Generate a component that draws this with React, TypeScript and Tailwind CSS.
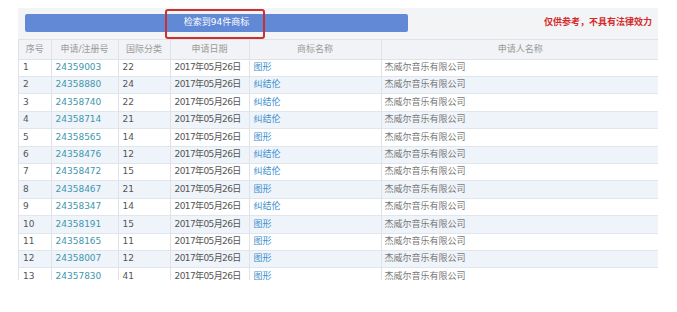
import React from 'react';

const rows = [
  ['1', '24359003', '22', '图形'],
  ['2', '24358880', '24', '纠结伦'],
  ['3', '24358740', '22', '纠结伦'],
  ['4', '24358714', '21', '纠结伦'],
  ['5', '24358565', '14', '图形'],
  ['6', '24358476', '12', '纠结伦'],
  ['7', '24358472', '15', '纠结伦'],
  ['8', '24358467', '21', '图形'],
  ['9', '24358347', '14', '纠结伦'],
  ['10', '24358191', '15', '图形'],
  ['11', '24358165', '11', '图形'],
  ['12', '24358007', '12', '图形'],
  ['13', '24357830', '41', '图形'],
];

const headers = ['序号', '申请/注册号', '国际分类', '申请日期', '商标名称', '申请人名称'];
const widths = ['w-[32px]', 'w-[67px]', 'w-[52px]', 'w-[79px]', 'w-[132px]', 'w-[278px]'];

const App: React.FC = () => {
  return (
    <div
      className="w-[677px] h-[312px] bg-white pl-[18px] pt-[8px] overflow-hidden"
      style={{ fontFamily: '"DejaVu Sans", "Noto Sans CJK SC", sans-serif' }}
    >
      <div className="relative w-[640px]">
        {/* top bar */}
        <div className="h-[31px] bg-[#f3f4f6] flex items-start justify-between pl-[7px] pr-[6px] pt-[6px]">
          <div className="w-[383px] h-[18px] bg-[#6289d5] rounded-[2px] flex items-center justify-center text-white text-[9px]">
            <span>检索到94件商标</span>
          </div>
          <span className="text-[9px] font-bold text-[#d42a2a] mt-[2px]">仅供参考，不具有法律效力</span>
        </div>
        <div className="absolute left-[147px] top-[1px] w-[100px] h-[30px] border-2 border-[#cf2e2e] rounded-[3px]"></div>

        {/* table */}
        <div className="h-[241px] overflow-hidden border-l border-[#dfe2e6]">
          <table className="table-fixed border-collapse w-[640px] text-[9px]">
            <colgroup>
              {widths.map(w => <col key={w} className={w} />)}
            </colgroup>
            <thead>
              <tr className="h-[19.6px] bg-[#f1f3f6] border-t border-b border-[#dfe2e6]">
                {headers.map(h => (
                  <th key={h} className="font-normal text-[#9a9a9a] text-center border-r border-[#dfe2e6] last:border-r-0 p-0">{h}</th>
                ))}
              </tr>
            </thead>
            <tbody>
              {rows.map((r, i) => (
                <tr key={r[0]} className={`h-[17.4px] border-b border-[#e1e6ec] ${i % 2 === 1 ? 'bg-[#eff4fa]' : 'bg-white'}`}>
                  <td className="pl-[4px] text-[#555] border-r border-[#dfe2e6] p-0">{r[0]}</td>
                  <td className="pl-[4px] text-[#3f96ad] border-r border-[#dfe2e6] p-0">{r[1]}</td>
                  <td className="pl-[4px] text-[#555] border-r border-[#dfe2e6] p-0">{r[2]}</td>
                  <td className="pl-[4px] text-[#555] tracking-[-0.6px] border-r border-[#dfe2e6] p-0">2017年05月26日</td>
                  <td className="pl-[4px] text-[#3b8fcf] border-r border-[#dfe2e6] p-0">{r[3]}</td>
                  <td className="pl-[3px] text-[#777] p-0">杰威尔音乐有限公司</td>
                </tr>
              ))}
            </tbody>
          </table>
        </div>
      </div>
    </div>
  );
};

export default App;
